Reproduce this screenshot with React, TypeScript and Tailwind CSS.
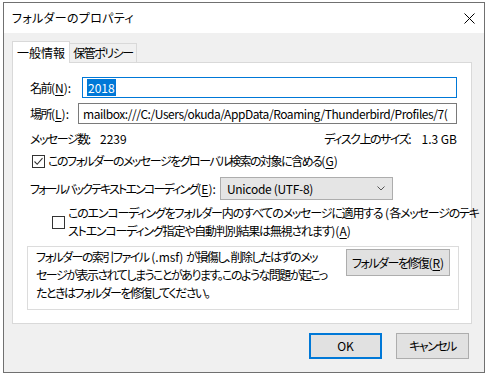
const U = ({ c }: { c: string }) => <span className="underline underline-offset-[2px]">{c}</span>;
const L = ({ children }: { children: React.ReactNode }) => <span className="tracking-[0px]">{children}</span>;

function CheckBox({ checked }: { checked?: boolean }) {
  return (
    <span className="w-[13px] h-[13px] border border-[#333333] bg-white flex items-center justify-center shrink-0">
      {checked && (
        <svg width="11" height="11" viewBox="0 0 11 11">
          <path d="M1.5 5.5 L4.2 8.3 L9.5 2.2" fill="none" stroke="#333333" strokeWidth="1.1" />
        </svg>
      )}
    </span>
  );
}

const jp = 'whitespace-nowrap tracking-[-1.5px]';

export default function App() {
  return (
    <div className="w-[488px] h-[378px] overflow-hidden bg-white text-black text-[12px] leading-[18px] font-['Noto_Sans_CJK_JP',sans-serif] [font-feature-settings:'palt']">
      <div className="ml-[3px] pt-[2px] w-[482px]">
        <div className="w-[482px] h-[371px] border border-[#707070] bg-[#f0f0f0] flex flex-col">
          {/* title bar */}
          <div className="h-[30px] bg-white flex items-center justify-between pl-[8px] pr-[9px]">
            <span className="whitespace-nowrap tracking-[0.3px]">フォルダーのプロパティ</span>
            <svg width="11" height="11" viewBox="0 0 11 11">
              <path d="M0.5 0.5 L10.5 10.5 M10.5 0.5 L0.5 10.5" stroke="#000" strokeWidth="1" />
            </svg>
          </div>

          <div className="pl-[8px] pt-[8px]">
            {/* tabs */}
            <div className="flex items-end h-[21px]">
              <div className="relative z-10 -mb-px h-[22px] w-[58px] bg-white border-x border-t border-[#d9d9d9] flex items-center justify-center whitespace-nowrap">
                一般情報
              </div>
              <div className={`h-[19px] w-[68px] -ml-px border-x border-t border-[#d9d9d9] flex items-center justify-center ${jp}`}>
                保管ポリシー
              </div>
            </div>

            {/* panel */}
            <div className="w-[460px] h-[262px] border border-[#d9d9d9] bg-white flex flex-col">
              <div className="flex items-center mt-[14px] h-[21px]">
                <span className={`w-[69px] pl-[17px] shrink-0 ${jp}`}>
                  名前<L>(<U c="N" />):</L>
                </span>
                <div className="w-[375px] h-[21px] border border-[#0078d7] flex items-center pl-[4px]">
                  <span className="bg-[#0078d7] text-white px-px leading-[17px]">2018</span>
                </div>
              </div>
              <div className="flex items-center mt-[5px] h-[21px]">
                <span className={`w-[65px] pl-[17px] shrink-0 ${jp}`}>
                  場所<L>(<U c="L" />):</L>
                </span>
                <div className="w-[379px] h-[21px] border border-[#7a7a7a] flex items-center pl-[4px] overflow-hidden whitespace-nowrap tracking-[-0.45px]">
                  mailbox:///C:/Users/okuda/AppData/Roaming/Thunderbird/Profiles/7(
                </div>
              </div>
              <div className="flex items-center justify-between mt-[7px] h-[16px] pl-[17px] pr-[14px]">
                <div className="flex">
                  <span className={`w-[70px] shrink-0 ${jp}`}>
                    メッセージ数<L>:</L>
                  </span>
                  <span>2239</span>
                </div>
                <div className="flex gap-[10px]">
                  <span className={jp}>
                    ディスク上のサイズ<L>:</L>
                  </span>
                  <span className="whitespace-nowrap">1.3 GB</span>
                </div>
              </div>
              <div className="flex items-center gap-[3px] mt-[6px] h-[16px] pl-[19px]">
                <CheckBox checked />
                <span className={jp}>
                  このフォルダーのメッセージをグローバル検索の対象に含める<L>(<U c="G" />)</L>
                </span>
              </div>
              <div className="flex items-center mt-[8px] h-[23px]">
                <span className="w-[207px] pl-[17px] shrink-0 whitespace-nowrap tracking-[-1.85px]">
                  フォールバックテキストエンコーディング<L>(<U c="E" />):</L>
                </span>
                <div className="w-[173px] h-[23px] border border-[#adadad] bg-[#e5e5e5] flex items-center justify-between pl-[6px] pr-[7px]">
                  <span className="whitespace-nowrap tracking-[-0.3px]">Unicode (UTF-8)</span>
                  <svg width="8" height="5" viewBox="0 0 8 5">
                    <path d="M0.5 0.5 L4 4 L7.5 0.5" fill="none" stroke="#555" strokeWidth="1" />
                  </svg>
                </div>
              </div>
              <div className="flex items-center gap-[3px] mt-[4px] pl-[39px]">
                <CheckBox />
                <span className="whitespace-nowrap tracking-[-1.2px]">
                  このエンコーディングをフォルダー内のすべてのメッセージに適用する<L> (</L>各メッセージのテキ
                  <br />
                  ストエンコーディング指定や自動判別結果は無視されます<L>)(<U c="A" />)</L>
                </span>
              </div>
              <div className="ml-[14px] mt-[6px] w-[432px] h-[64px] border border-[#dcdcdc] flex justify-between pl-[8px] pr-[8px]">
                <span className={`pt-px ${jp}`}>
                  フォルダーの索引ファイル<L> (.msf) </L>が損傷し、削除したはずのメッ
                  <br />
                  セージが表示されてしまうことがあります。このような問題が起こっ
                  <br />
                  たときはフォルダーを修復してください。
                </span>
                <div className={`mt-[2px] w-[104px] h-[27px] shrink-0 border border-[#adadad] bg-[#e1e1e1] flex items-center justify-center ${jp}`}>
                  フォルダーを修復<L>(<U c="R" />)</L>
                </div>
              </div>
            </div>

            {/* footer buttons */}
            <div className="flex justify-end gap-[14px] mt-[9px] pr-[15px]">
              <div className="w-[73px] h-[26px] border-2 border-[#0078d7] bg-[#e1e1e1] flex items-center justify-center">
                OK
              </div>
              <div className={`w-[73px] h-[26px] border border-[#adadad] bg-[#e1e1e1] flex items-center justify-center ${jp}`}>
                キャンセル
              </div>
            </div>
          </div>
        </div>
      </div>
    </div>
  );
}
